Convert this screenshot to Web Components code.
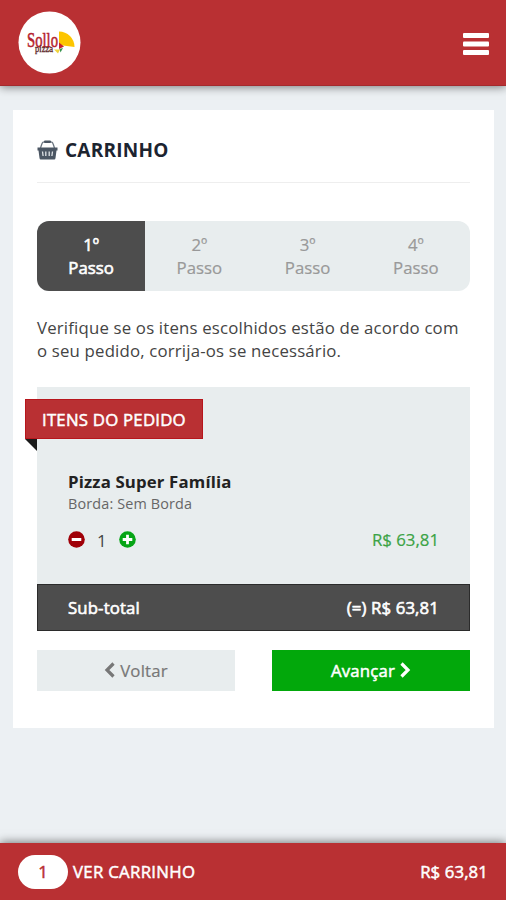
<!DOCTYPE html>
<html lang="pt-BR">
<head>
<meta charset="utf-8">
<meta name="viewport" content="width=device-width, initial-scale=1">
<title>Sollo Pizza - Carrinho</title>
<style>
    html, body {
        margin: 0;
        height: 100%;
    }

    body {
        background: #ecf0f3;
        color: #444;
        font: 16.8px/23.4px "Open Sans", "Noto Sans", sans-serif;
        overflow: hidden;
    }
</style>
</head>
<body>
<cart-page>
    <top-bar slot="header"></top-bar>
    <cart-panel heading="CARRINHO">
        <step-list current="1" total="4"></step-list>
        <p>Verifique se os itens escolhidos estão de acordo com o seu pedido, corrija-os se necessário.</p>
        <order-box heading="ITENS DO PEDIDO" total="R$ 63,81">
            <order-item name="Pizza Super Família" detail="Borda: Sem Borda" amount="1" price="R$ 63,81"></order-item>
        </order-box>
        <nav-button slot="actions" kind="back">Voltar</nav-button>
        <nav-button slot="actions" kind="next">Avançar</nav-button>
    </cart-panel>
    <cart-bar slot="footer" count="1" total="R$ 63,81">VER CARRINHO</cart-bar>
</cart-page>

<script>
class CartPage extends HTMLElement
{
    connectedCallback()
    {
        this.attachShadow({mode: 'open'}).innerHTML = `
        <style>
            :host {
                display: flex;
                flex-direction: column;
                height: 100vh;
            }

            main {
                flex: 1;
                padding: 24px 12px 0 13px;
            }

            ::slotted([slot]) {
                z-index: 1;
            }
        </style>
        <slot name="header"></slot>
        <main><slot></slot></main>
        <slot name="footer"></slot>
        `;
    }
}

class TopBar extends HTMLElement
{
    connectedCallback()
    {
        this.attachShadow({mode: 'open'}).innerHTML = `
        <style>
            :host {
                display: flex;
                justify-content: space-between;
                align-items: center;
                box-sizing: border-box;
                height: 86px;
                padding: 0 17px 0 18px;
                background: #b93033;
                border-bottom: 1px solid #a42a2d;
                box-shadow: 0 1px 9px rgba(0, 0, 0, .5);
            }

            svg {
                display: block;
            }

            .menu {
                margin-top: 3px;
            }
        </style>
        <svg class="logo" width="63" height="63" viewBox="0 0 63 63">
            <circle cx="31.5" cy="31.5" r="31" fill="#fff"/>
            <path d="M41 20.500A15.500 15.500 0 0 1 56.500 36L41 34Z" fill="#fdc500"/>
            <path d="M41 31.500L46 35.500L41 38Z" fill="#c8202e"/>
            <path d="M36 38.500l4 4 2-4z" fill="#f0d33c"/>
            <path d="M41.500 38l3.500-1-2.500 4.500z" fill="#35934c"/>
            <text x="9" y="35.500" textLength="31" lengthAdjust="spacingAndGlyphs" font-family="Liberation Serif" font-size="22" fill="#b51f2e" stroke="#b51f2e" stroke-width=".6">Sollo</text>
            <text x="17" y="41" textLength="18" lengthAdjust="spacingAndGlyphs" font-family="Liberation Serif" font-size="9.500" fill="#5a2528" stroke="#5a2528" stroke-width=".3">pizza</text>
        </svg>
        <svg class="menu" width="26" height="22" viewBox="0 0 26 22" fill="#fff">
            <rect width="26" height="5" rx="1"/>
            <rect y="8.500" width="26" height="5" rx="1"/>
            <rect y="17" width="26" height="5" rx="1"/>
        </svg>
        `;
    }
}

class CartPanel extends HTMLElement
{
    connectedCallback()
    {
        this.attachShadow({mode: 'open'}).innerHTML = `
        <style>
            :host {
                display: block;
                box-sizing: border-box;
                height: 618px;
                padding: 24px 24px 0;
                background: #fff;
            }

            h1 {
                display: flex;
                align-items: center;
                gap: 7px;
                box-sizing: border-box;
                height: 49px;
                margin: 0 0 38px;
                padding-bottom: 16px;
                border-bottom: 1px solid #eee;
                color: #1c2430;
                font-size: 19px;
                font-weight: 700;
                letter-spacing: .25px;
            }

            h1 span {
                padding-top: 1px;
            }

            ::slotted(p) {
                margin: 25px 0 24px;
                letter-spacing: .18px;
            }

            footer {
                display: grid;
                grid-template-columns: 1fr 1fr;
                gap: 37px;
                margin-top: 19px;
            }
        </style>
        <h1>
            <svg width="21" height="20" viewBox="0 0 21 20">
                <path d="M3.500 8L5 3.500Q5.500 1.800 7.500 1.800H13.500Q15.500 1.800 16 3.500L17.500 8" fill="none" stroke="#6c7681" stroke-width="1.300"/>
                <rect x="7" y=".5" width="7" height="2.500" rx="1" fill="#4b5663"/>
                <path d="M.5 7.500H20.500V10.500H19.500L18.500 18Q18.300 19.500 17.300 19.500H3.700Q2.700 19.500 2.500 18L1.500 10.500H.5Z" fill="#4b5663"/>
                <path d="M5.500 11.500l.6 4.500M8.800 11.500v4.500M12.200 11.500v4.500M15.500 11.500l-.6 4.500" stroke="#dfe3e6" stroke-width="1.300"/>
            </svg>
            <span>${this.getAttribute('heading')}</span>
        </h1>
        <slot></slot>
        <footer><slot name="actions"></slot></footer>
        `;
    }
}

class StepList extends HTMLElement
{
    connectedCallback()
    {
        const current = Number(this.getAttribute('current'));
        const total = Number(this.getAttribute('total'));
        let steps = '';

        for (let i = 1; i <= total; i++)
        {
            steps += `<div class="${i === current ? 'step active' : 'step'}">${i}º<br>Passo</div>`;
        }

        this.attachShadow({mode: 'open'}).innerHTML = `
        <style>
            :host {
                display: grid;
                grid-template-columns: repeat(${total}, 1fr);
                height: 70px;
                border-radius: 12px;
                overflow: hidden;
                background: #e8edee;
                color: #999;
                -webkit-text-stroke: .2px;
            }

            .step {
                padding-top: 12px;
                text-align: center;
            }

            .active {
                background: #4d4d4d;
                color: #fff;
                -webkit-text-stroke: .6px;
            }
        </style>
        ${steps}
        `;
    }
}

class OrderBox extends HTMLElement
{
    connectedCallback()
    {
        this.attachShadow({mode: 'open'}).innerHTML = `
        <style>
            :host {
                display: flex;
                flex-direction: column;
                box-sizing: border-box;
                height: 244px;
                padding-top: 12px;
                background: #e8edee;
            }

            .ribbon {
                position: relative;
                align-self: flex-start;
                box-sizing: border-box;
                width: 178px;
                height: 40px;
                margin-left: -12px;
                padding-left: 16px;
                border: 1px solid #b7161c;
                background: #b93033;
                color: #fff;
                line-height: 39px;
                letter-spacing: .22px;
                white-space: nowrap;
                -webkit-text-stroke: .5px;
            }

            .ribbon::after {
                content: "";
                position: absolute;
                top: 39px;
                left: -1px;
                border-top: 12px solid #1a1a1a;
                border-left: 12px solid transparent;
            }

            .total {
                display: flex;
                justify-content: space-between;
                box-sizing: border-box;
                height: 47px;
                margin-top: auto;
                padding: 0 30px;
                border: 1px solid #2b2b2b;
                background: #4d4d4d;
                color: #fff;
                line-height: 46px;
                letter-spacing: .12px;
                -webkit-text-stroke: .6px;
            }
        </style>
        <div class="ribbon">${this.getAttribute('heading')}</div>
        <slot></slot>
        <div class="total">
            <span>Sub-total</span>
            <span>(=) ${this.getAttribute('total')}</span>
        </div>
        `;
    }
}

class OrderItem extends HTMLElement
{
    connectedCallback()
    {
        this.attachShadow({mode: 'open'}).innerHTML = `
        <style>
            :host {
                display: block;
                padding: 31px 31px 0;
            }

            .name {
                color: #222;
                font-weight: 700;
                letter-spacing: .15px;
            }

            .detail {
                padding-top: 1px;
                color: #666;
                font-size: 14.4px;
                line-height: 20px;
                letter-spacing: .15px;
            }

            .row {
                display: flex;
                align-items: center;
                margin-top: 13px;
            }

            .amount {
                margin: 2px 12px 0;
            }

            .price {
                margin-left: auto;
                color: #3ba345;
                -webkit-text-stroke: .2px;
            }
        </style>
        <div class="name">${this.getAttribute('name')}</div>
        <div class="detail">${this.getAttribute('detail')}</div>
        <div class="row">
            <svg width="17" height="17" viewBox="0 0 17 17">
                <circle cx="8.500" cy="8.500" r="8.300" fill="#a00008"/>
                <rect x="3.700" y="7.100" width="9.600" height="2.800" rx=".5" fill="#fff"/>
            </svg>
            <span class="amount">${this.getAttribute('amount')}</span>
            <svg width="17" height="17" viewBox="0 0 17 17">
                <circle cx="8.500" cy="8.500" r="8.300" fill="#06a516"/>
                <path d="M8.500 3.700v9.600M3.700 8.500h9.600" stroke="#fff" stroke-width="2.800"/>
            </svg>
            <span class="price">${this.getAttribute('price')}</span>
        </div>
        `;
    }
}

class NavButton extends HTMLElement
{
    static ICONS = {
        back: 'M9.500 1.500L3 8l6.500 6.500',
        next: 'M2.500 1.500L9 8l-6.500 6.500'
    }

    connectedCallback()
    {
        const kind = this.getAttribute('kind');

        this.attachShadow({mode: 'open'}).innerHTML = `
        <style>
            :host {
                display: flex;
                justify-content: center;
                align-items: center;
                gap: 4px;
                height: 41px;
                background: #e8edee;
                color: #777;
                letter-spacing: .2px;
                -webkit-text-stroke: .2px;
            }

            :host([kind="next"]) {
                flex-direction: row-reverse;
                background: #02a80b;
                color: #fff;
                -webkit-text-stroke: .5px;
            }
        </style>
        <svg width="12" height="16" viewBox="0 0 12 16">
            <path d="${NavButton.ICONS[kind]}" fill="none" stroke="currentColor" stroke-width="3.200"/>
        </svg>
        <span><slot></slot></span>
        `;
    }
}

class CartBar extends HTMLElement
{
    connectedCallback()
    {
        this.attachShadow({mode: 'open'}).innerHTML = `
        <style>
            :host {
                display: flex;
                align-items: center;
                box-sizing: border-box;
                height: 57px;
                padding: 0 18px;
                background: #b93033;
                color: #fff;
                box-shadow: 0 -1px 9px rgba(0, 0, 0, .5);
                -webkit-text-stroke: .5px;
            }

            .count {
                width: 50px;
                height: 34px;
                margin-right: 5px;
                border-radius: 17px;
                background: #fff;
                color: #b93033;
                line-height: 34px;
                text-align: center;
            }

            .label {
                letter-spacing: .3px;
            }

            .total {
                margin-left: auto;
                letter-spacing: .1px;
            }
        </style>
        <span class="count">${this.getAttribute('count')}</span>
        <span class="label"><slot></slot></span>
        <span class="total">${this.getAttribute('total')}</span>
        `;
    }
}

customElements.define('cart-page', CartPage);
customElements.define('top-bar', TopBar);
customElements.define('cart-panel', CartPanel);
customElements.define('step-list', StepList);
customElements.define('order-box', OrderBox);
customElements.define('order-item', OrderItem);
customElements.define('nav-button', NavButton);
customElements.define('cart-bar', CartBar);
</script>
</body>
</html>
